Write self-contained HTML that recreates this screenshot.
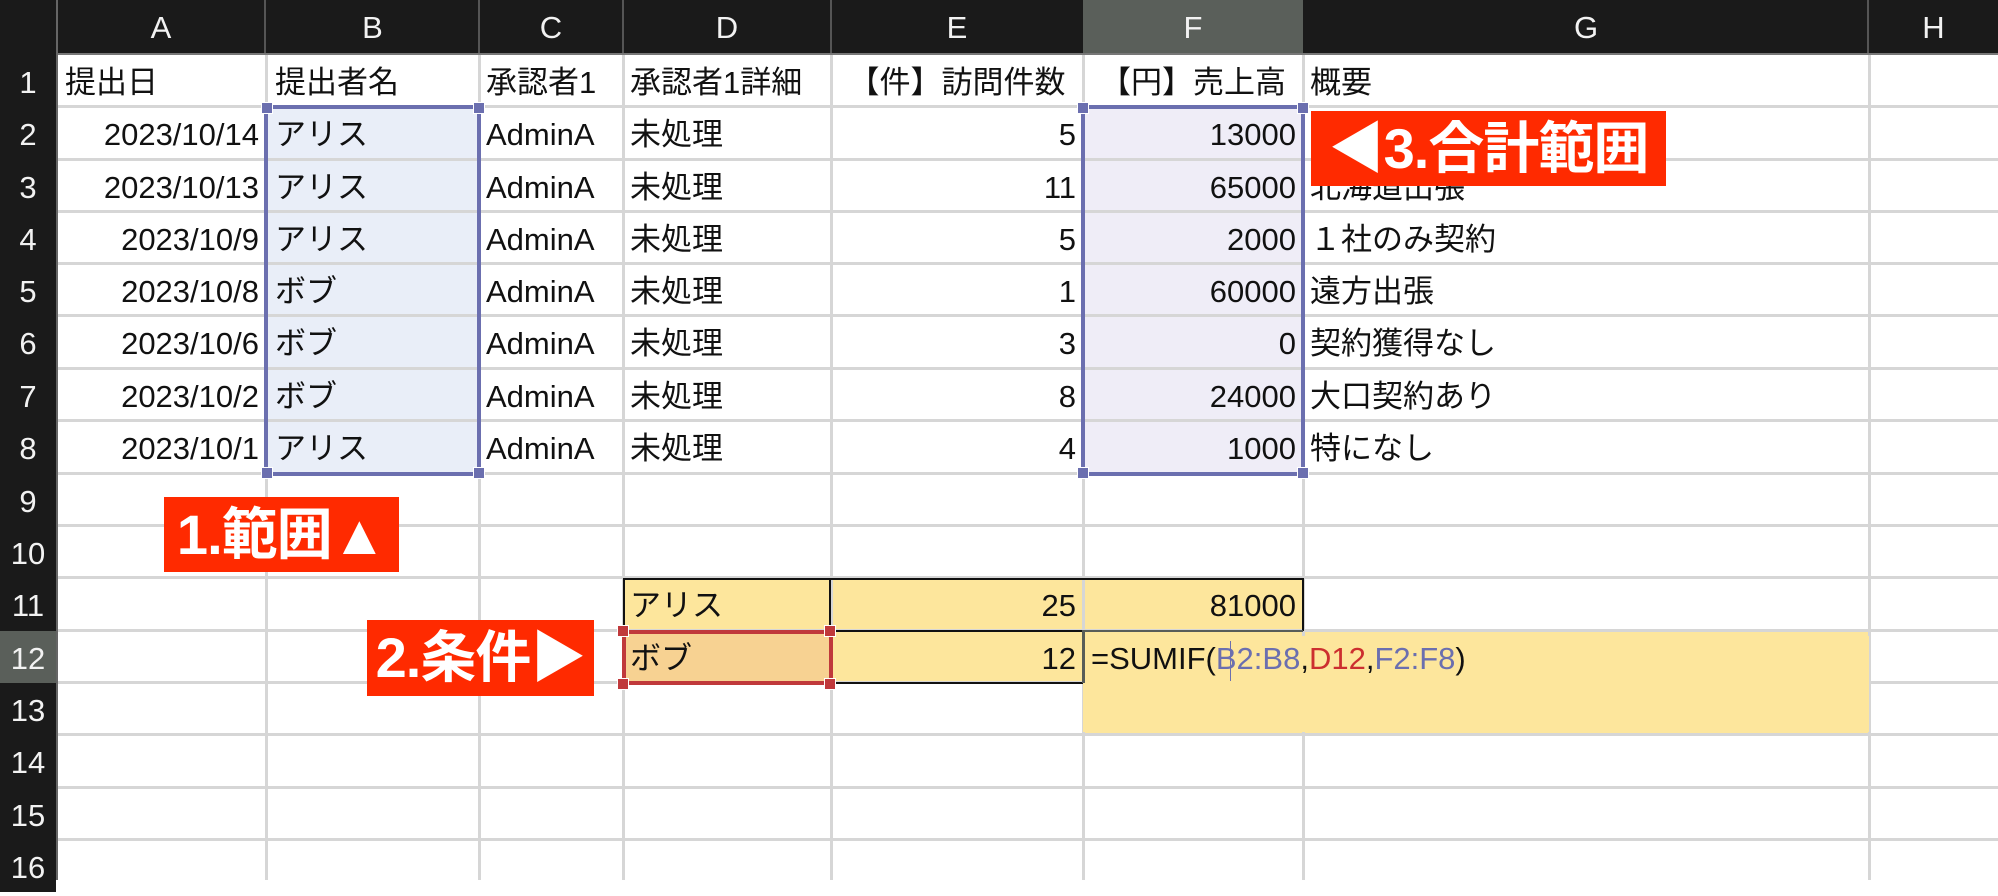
<!DOCTYPE html>
<html><head><meta charset="utf-8"><style>
*{margin:0;padding:0;box-sizing:border-box}
body{width:1998px;height:880px;overflow:hidden;background:#fff;position:relative;font-family:"Liberation Sans","Noto Sans CJK JP",sans-serif;color:#111}
.a{position:absolute}
.hl{position:absolute;left:0;width:1998px;height:3px;background:#d6d6d6}
.vl{position:absolute;top:0;width:3px;height:880px;background:#d6d6d6}
.c{position:absolute;height:52px;line-height:56px;font-size:31px;white-space:nowrap;padding:0 7px;overflow:visible}
.r{text-align:right}
.hd{position:absolute;top:0;height:53px;line-height:56px;background:#1a1a1a;color:#f2f2f2;font-size:31px;text-align:center}
.rn{position:absolute;left:0;width:56px;height:52px;line-height:56px;background:#1a1a1a;color:#f2f2f2;font-size:31px;text-align:center}
.lab{position:absolute;background:#ff2a00;color:#fff;font-weight:bold;font-size:56px;line-height:76px;white-space:nowrap;text-align:center;letter-spacing:-1px}
.hn{position:absolute;width:12px;height:12px}
</style></head><body>
<div class="a" style="left:266px;top:107px;width:213px;height:367px;background:#e9eef8"></div>
<div class="a" style="left:1083px;top:107px;width:220px;height:367px;background:#efedf7"></div>
<div class="a" style="left:623px;top:578px;width:680px;height:105px;background:#fde69c"></div>
<div class="a" style="left:1083px;top:631px;width:786px;height:104px;background:#fde69c"></div>
<div class="a" style="left:623px;top:631px;width:208px;height:52px;background:#f7d292"></div>

<div class="hl" style="top:105px"></div><div class="hl" style="top:158px"></div><div class="hl" style="top:210px"></div>
<div class="hl" style="top:262px"></div><div class="hl" style="top:314px"></div><div class="hl" style="top:367px"></div>
<div class="hl" style="top:419px"></div><div class="hl" style="top:472px"></div><div class="hl" style="top:524px"></div>
<div class="hl" style="top:576px"></div><div class="hl" style="top:629px"></div><div class="hl" style="top:681px"></div>
<div class="hl" style="top:733px"></div><div class="hl" style="top:786px"></div><div class="hl" style="top:838px"></div>
<div class="vl" style="left:265px"></div><div class="vl" style="left:478px"></div><div class="vl" style="left:622px"></div>
<div class="vl" style="left:830px"></div><div class="vl" style="left:1082px"></div><div class="vl" style="left:1302px"></div>
<div class="vl" style="left:1868px"></div>
<div class="a" style="left:1083px;top:636px;width:786px;height:96px;background:#fde69c"></div>

<div class="a" style="left:623px;top:578px;width:681px;height:2px;background:#111"></div>
<div class="a" style="left:623px;top:578px;width:2px;height:53px;background:#111"></div>
<div class="a" style="left:829px;top:578px;width:2px;height:106px;background:#111"></div>
<div class="a" style="left:1302px;top:578px;width:2px;height:53px;background:#111"></div>
<div class="a" style="left:831px;top:630px;width:252px;height:2px;background:#111"></div>
<div class="a" style="left:831px;top:682px;width:252px;height:2px;background:#111"></div>
<div class="a" style="left:1082px;top:630px;width:221px;height:2px;background:#585d58"></div>
<div class="a" style="left:1082px;top:630px;width:3px;height:53px;background:#585d58"></div>

<div class="hd" style="left:0;width:1998px"></div>
<div class="a" style="left:0;top:0;width:56px;height:53px;background:#1a1a1a"></div>
<div class="a" style="left:8px;top:7px;width:0;height:0;border-left:42px solid transparent;border-bottom:42px solid #5c615c"></div>
<div class="hd" style="left:56px;width:210px">A</div>
<div class="hd" style="left:266px;width:213px">B</div>
<div class="hd" style="left:479px;width:144px">C</div>
<div class="hd" style="left:623px;width:208px">D</div>
<div class="hd" style="left:831px;width:252px">E</div>
<div class="hd" style="left:1083px;width:220px;background:#5a5f5a">F</div>
<div class="hd" style="left:1303px;width:566px">G</div>
<div class="hd" style="left:1869px;width:129px">H</div>
<div class="a" style="left:264px;top:0;width:2px;height:53px;background:#555"></div>
<div class="a" style="left:478px;top:0;width:2px;height:53px;background:#555"></div>
<div class="a" style="left:622px;top:0;width:2px;height:53px;background:#555"></div>
<div class="a" style="left:830px;top:0;width:2px;height:53px;background:#555"></div>
<div class="a" style="left:1867px;top:0;width:2px;height:53px;background:#555"></div>
<div class="a" style="left:0;top:53px;width:1998px;height:2px;background:#777"></div>
<div class="a" style="left:0;top:0;width:56px;height:880px;background:#1a1a1a"></div>
<div class="a" style="left:56px;top:0;width:2px;height:880px;background:#666"></div>

<div class="rn" style="top:55px">1</div><div class="rn" style="top:107px">2</div><div class="rn" style="top:160px">3</div>
<div class="rn" style="top:212px">4</div><div class="rn" style="top:264px">5</div><div class="rn" style="top:316px">6</div>
<div class="rn" style="top:369px">7</div><div class="rn" style="top:421px">8</div><div class="rn" style="top:474px">9</div>
<div class="rn" style="top:526px">10</div><div class="rn" style="top:578px">11</div>
<div class="rn" style="top:631px;background:#5a5f5a">12</div>
<div class="rn" style="top:683px">13</div><div class="rn" style="top:735px">14</div><div class="rn" style="top:788px">15</div>
<div class="rn" style="top:840px">16</div>

<div class="c" style="left:58px;top:55px">提出日</div>
<div class="c" style="left:268px;top:55px">提出者名</div>
<div class="c" style="left:479px;top:55px">承認者1</div>
<div class="c" style="left:623px;top:55px">承認者1詳細</div>
<div class="c" style="left:831px;top:55px;width:252px;text-align:center">【件】訪問件数</div>
<div class="c" style="left:1083px;top:55px;width:220px;text-align:center">【円】売上高</div>
<div class="c" style="left:1303px;top:55px">概要</div>

<div class="c r" style="left:56px;width:210px;top:107px">2023/10/14</div>
<div class="c r" style="left:56px;width:210px;top:160px">2023/10/13</div>
<div class="c r" style="left:56px;width:210px;top:212px">2023/10/9</div>
<div class="c r" style="left:56px;width:210px;top:264px">2023/10/8</div>
<div class="c r" style="left:56px;width:210px;top:316px">2023/10/6</div>
<div class="c r" style="left:56px;width:210px;top:369px">2023/10/2</div>
<div class="c r" style="left:56px;width:210px;top:421px">2023/10/1</div>

<div class="c" style="left:268px;top:107px">アリス</div>
<div class="c" style="left:268px;top:160px">アリス</div>
<div class="c" style="left:268px;top:212px">アリス</div>
<div class="c" style="left:268px;top:264px">ボブ</div>
<div class="c" style="left:268px;top:316px">ボブ</div>
<div class="c" style="left:268px;top:369px">ボブ</div>
<div class="c" style="left:268px;top:421px">アリス</div>

<div class="c" style="left:479px;top:107px">AdminA</div>
<div class="c" style="left:479px;top:160px">AdminA</div>
<div class="c" style="left:479px;top:212px">AdminA</div>
<div class="c" style="left:479px;top:264px">AdminA</div>
<div class="c" style="left:479px;top:316px">AdminA</div>
<div class="c" style="left:479px;top:369px">AdminA</div>
<div class="c" style="left:479px;top:421px">AdminA</div>

<div class="c" style="left:623px;top:107px">未処理</div>
<div class="c" style="left:623px;top:160px">未処理</div>
<div class="c" style="left:623px;top:212px">未処理</div>
<div class="c" style="left:623px;top:264px">未処理</div>
<div class="c" style="left:623px;top:316px">未処理</div>
<div class="c" style="left:623px;top:369px">未処理</div>
<div class="c" style="left:623px;top:421px">未処理</div>

<div class="c r" style="left:831px;width:252px;top:107px">5</div>
<div class="c r" style="left:831px;width:252px;top:160px">11</div>
<div class="c r" style="left:831px;width:252px;top:212px">5</div>
<div class="c r" style="left:831px;width:252px;top:264px">1</div>
<div class="c r" style="left:831px;width:252px;top:316px">3</div>
<div class="c r" style="left:831px;width:252px;top:369px">8</div>
<div class="c r" style="left:831px;width:252px;top:421px">4</div>

<div class="c r" style="left:1083px;width:220px;top:107px">13000</div>
<div class="c r" style="left:1083px;width:220px;top:160px">65000</div>
<div class="c r" style="left:1083px;width:220px;top:212px">2000</div>
<div class="c r" style="left:1083px;width:220px;top:264px">60000</div>
<div class="c r" style="left:1083px;width:220px;top:316px">0</div>
<div class="c r" style="left:1083px;width:220px;top:369px">24000</div>
<div class="c r" style="left:1083px;width:220px;top:421px">1000</div>

<div class="c" style="left:1303px;top:107px">広域エリアを回る</div>
<div class="c" style="left:1303px;top:160px">北海道出張</div>
<div class="c" style="left:1303px;top:212px">１社のみ契約</div>
<div class="c" style="left:1303px;top:264px">遠方出張</div>
<div class="c" style="left:1303px;top:316px">契約獲得なし</div>
<div class="c" style="left:1303px;top:369px">大口契約あり</div>
<div class="c" style="left:1303px;top:421px">特になし</div>

<div class="c" style="left:623px;top:578px">アリス</div>
<div class="c r" style="left:831px;width:252px;top:578px">25</div>
<div class="c r" style="left:1083px;width:220px;top:578px">81000</div>
<div class="c" style="left:623px;top:631px">ボブ</div>
<div class="c r" style="left:831px;width:252px;top:631px">12</div>
<div class="c" style="left:1087px;top:631px;padding:0 4px">=SUMIF(<span style="color:#6b6faf">B2:B8</span>,<span style="color:#cc2f2f">D12</span>,<span style="color:#6b6faf">F2:F8</span>)</div>
<div class="a" style="left:1230px;top:641px;width:1px;height:40px;background:#6b6faf"></div>

<div class="a" style="left:264px;top:105px;width:217px;height:371px;border:4px solid #6b6faf"></div>
<div class="hn" style="left:261px;top:102px;background:#6b6faf;border:1px solid #fff"></div>
<div class="hn" style="left:473px;top:102px;background:#6b6faf;border:1px solid #fff"></div>
<div class="hn" style="left:261px;top:467px;background:#6b6faf;border:1px solid #fff"></div>
<div class="hn" style="left:473px;top:467px;background:#6b6faf;border:1px solid #fff"></div>
<div class="a" style="left:1081px;top:105px;width:224px;height:371px;border:4px solid #6b6faf"></div>
<div class="hn" style="left:1077px;top:102px;background:#6b6faf;border:1px solid #fff"></div>
<div class="hn" style="left:1297px;top:102px;background:#6b6faf;border:1px solid #fff"></div>
<div class="hn" style="left:1077px;top:467px;background:#6b6faf;border:1px solid #fff"></div>
<div class="hn" style="left:1297px;top:467px;background:#6b6faf;border:1px solid #fff"></div>
<div class="a" style="left:622px;top:630px;width:211px;height:55px;border:4px solid #c0393b"></div>
<div class="hn" style="left:617px;top:625px;background:#c0393b;border:1px solid #fff"></div>
<div class="hn" style="left:824px;top:625px;background:#c0393b;border:1px solid #fff"></div>
<div class="hn" style="left:617px;top:678px;background:#c0393b;border:1px solid #fff"></div>
<div class="hn" style="left:824px;top:678px;background:#c0393b;border:1px solid #fff"></div>

<div class="lab" style="left:164px;top:497px;width:235px;height:75px">1.範囲▲</div>
<div class="lab" style="left:367px;top:620px;width:227px;height:76px">2.条件▶</div>
<div class="lab" style="left:1311px;top:111px;width:355px;height:75px">◀3.合計範囲</div>
</body></html>
